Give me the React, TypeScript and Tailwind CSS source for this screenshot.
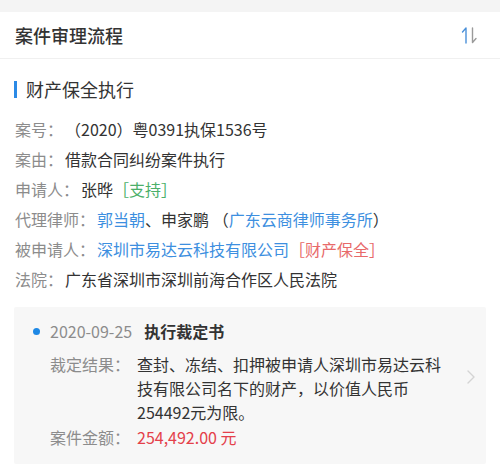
import React from 'react'

const FONT = { fontFamily: '"Noto Sans CJK SC", "Noto Sans", sans-serif' }

const SortIcon = () => (
  <svg width="18" height="18" viewBox="0 0 18 18" fill="none" aria-hidden="true">
    <path d="M5 17V2L1.5 6" stroke="#4a90d9" strokeWidth="1.4" strokeLinecap="round" strokeLinejoin="round" />
    <path d="M11.5 2V16.5L15 12.5" stroke="#9a9a9a" strokeWidth="1.4" strokeLinecap="round" strokeLinejoin="round" />
  </svg>
)

const Chevron = () => (
  <svg width="10" height="16" viewBox="0 0 10 16" fill="none" aria-hidden="true">
    <path d="M2 2L8 8L2 14" stroke="#d4d4d4" strokeWidth="1.4" strokeLinecap="round" strokeLinejoin="round" />
  </svg>
)

const Row = ({ label, children }: { label: string; children: React.ReactNode }) => (
  <div className="flex h-[30px] items-center whitespace-nowrap">
    <span className="text-[#8c8c8c]">{label}：</span>
    <span className="ml-[2px] text-[#333333]">{children}</span>
  </div>
)

export default function App() {
  return (
    <div className="h-[475px] w-[500px] overflow-hidden bg-white" style={FONT}>
      <div className="h-[12px] bg-[#f4f4f4]" />
      <div className="flex h-[47px] items-center justify-between border-b border-[#f0f0f0] pl-[15px] pr-[21px]">
        <span className="text-[18px] font-medium text-[#333333]">案件审理流程</span>
        <SortIcon />
      </div>

      <div className="mt-[20px] flex h-[20px] items-center pl-[14px]">
        <span className="h-[17px] w-[3px] bg-[#2b8ae6]" />
        <span className="ml-[9px] text-[18px] leading-[20px] text-[#333333]">财产保全执行</span>
      </div>

      <div className="mt-[15px] px-[15px] text-[16px]">
        <Row label="案号">（2020）粤0391执保1536号</Row>
        <Row label="案由">借款合同纠纷案件执行</Row>
        <Row label="申请人">
          张晔<span className="text-[#4caf6a]">［支持］</span>
        </Row>
        <Row label="代理律师">
          <span className="text-[#3d8fe0]">郭当朝</span>、申家鹏 （<span className="text-[#3d8fe0]">广东云商律师事务所</span>）
        </Row>
        <Row label="被申请人">
          <span className="text-[#3d8fe0]">深圳市易达云科技有限公司</span>
          <span className="text-[#e86a6a]">［财产保全］</span>
        </Row>
        <Row label="法院">广东省深圳市深圳前海合作区人民法院</Row>
      </div>

      <div className="mx-[14px] mt-[13px] flex h-[157px] rounded-[2px] bg-[#f7f7f7] pl-[19px] pr-[10px] pt-[12px]">
        <div className="flex-1 text-[16px]">
          <div className="flex h-[24px] items-center">
            <span className="h-[7px] w-[7px] rounded-full bg-[#1e88e5]" />
            <span className="ml-[10px] text-[#8c8c8c]">2020-09-25</span>
            <span className="ml-[12px] font-bold text-[#333333]">执行裁定书</span>
          </div>
          <div className="ml-[17px] mt-[9px] flex leading-[24px]">
            <span className="whitespace-nowrap text-[#8c8c8c]">裁定结果：</span>
            <span className="ml-[7px] w-[316px] text-[#333333]">
              查封、冻结、扣押被申请人深圳市易达云科技有限公司名下的财产，以价值人民币254492元为限。
            </span>
          </div>
          <div className="ml-[17px] mt-[1px] flex leading-[24px]">
            <span className="text-[#8c8c8c]">案件金额：</span>
            <span className="ml-[7px] text-[#e4404a]">254,492.00 元</span>
          </div>
        </div>
        <div className="mt-[50px]">
          <Chevron />
        </div>
      </div>
    </div>
  )
}
